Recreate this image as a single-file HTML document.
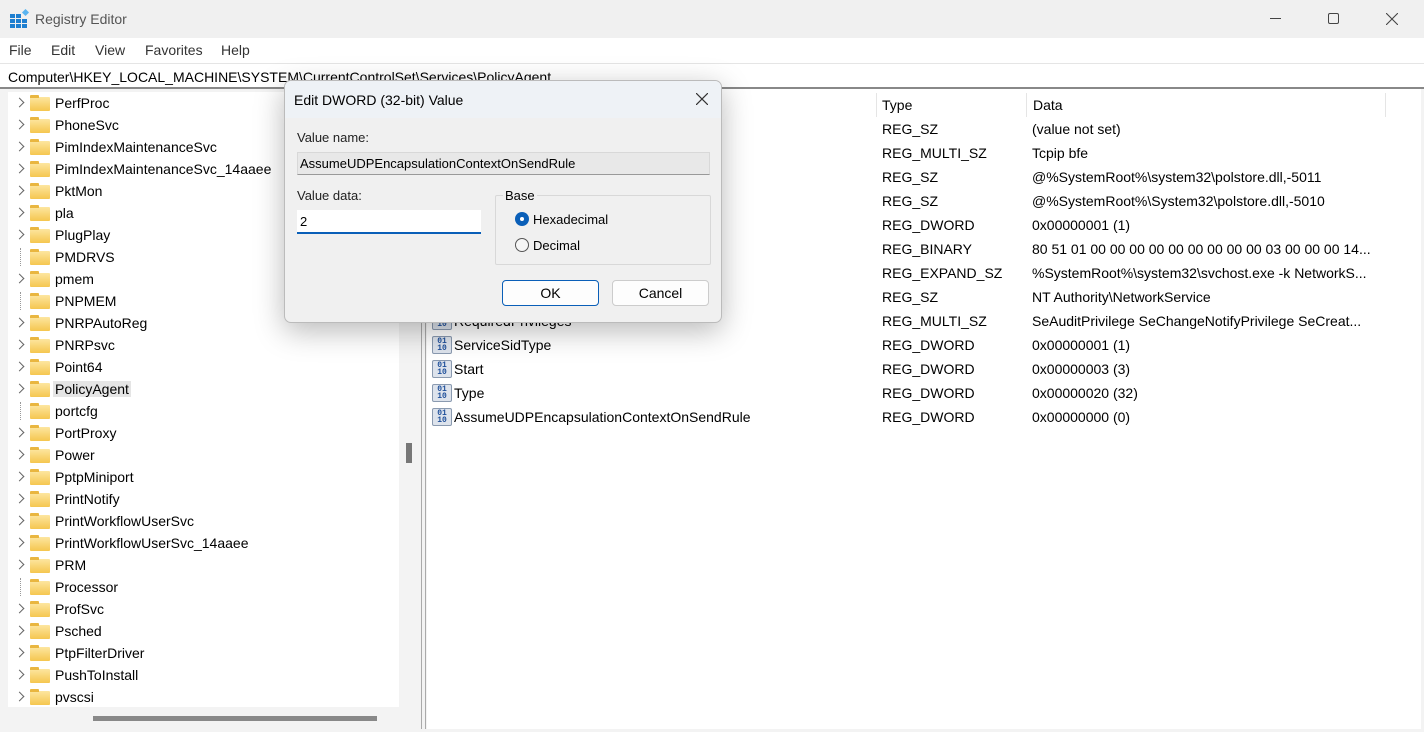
<!DOCTYPE html>
<html><head><meta charset="utf-8"><style>
*{margin:0;padding:0;box-sizing:border-box}
body{width:1424px;height:732px;overflow:hidden;background:#f3f3f3;font-family:"Liberation Sans",sans-serif;font-size:14px;color:#000;position:relative}
.abs{position:absolute}
.title{left:0;top:0;width:1424px;height:38px;background:#f0f0f0}
.menu{left:0;top:38px;width:1424px;height:25px;background:#fff}
.menu span{position:absolute;top:4px;color:#333;font-size:14px}
.addr{left:0;top:63px;width:1424px;height:26px;background:#fff;border-top:1px solid #e5e5e5;border-bottom:2px solid #888;padding:5px 8px;font-size:14px;white-space:nowrap}
.tree{left:3px;top:89px;width:418px;height:640px;background:#f3f3f3}
.treein{left:8px;top:92px;width:391px;height:615px;background:#fff}
.row{position:absolute;left:0;height:22px;width:391px;font-size:14px}
.row .ch{position:absolute;left:8px;top:7px;width:7px;height:7px;border-right:1.3px solid #666;border-top:1.3px solid #666;transform:rotate(45deg)}
.row .dot{position:absolute;left:12px;top:2px;width:1px;height:18px;border-left:1px dotted #999}
.row .fd{position:absolute;left:22px;top:5px;width:20px;height:14px;background:linear-gradient(#fde6a0,#f5c64f);border-radius:1px}
.row .fd:before{content:"";position:absolute;left:0;top:-2px;width:9px;height:3px;background:#e9b640;border-radius:1px 1px 0 0}
.row .t{position:absolute;left:47px;top:3px}
.sel{background:#e5e5e5}
.list{left:427px;top:89px;width:994px;height:640px;background:#fff}
.ic{position:absolute;left:5px;top:3px;width:20px;height:18px;background:#dde3ec;border:1px solid #8a9ab0;border-radius:2px;font-size:8px;line-height:7px;font-weight:bold;color:#1e4f9a;text-align:center;padding-top:1px;font-family:"Liberation Mono",monospace}
.dlg{left:284px;top:80px;width:438px;height:243px;background:#f0f0f0;border:1px solid #bbb;border-radius:7px;box-shadow:0 8px 30px rgba(0,0,0,.28);overflow:hidden}
.btn{position:absolute;height:26px;border:1px solid #ccc;border-radius:4px;background:#fdfdfd;text-align:center;line-height:24px;font-size:14px}
</style></head><body>
<div class="abs title">
 <svg class="abs" style="left:10px;top:9px" width="20" height="20" viewBox="0 0 20 20">
  <g fill="#1e7fd0"><rect x="0" y="5" width="5" height="4"/><rect x="6" y="5" width="5" height="4"/><rect x="0" y="10" width="5" height="4"/><rect x="6" y="10" width="5" height="4"/><rect x="12" y="10" width="5" height="4"/><rect x="0" y="15" width="5" height="4"/><rect x="6" y="15" width="5" height="4"/><rect x="12" y="15" width="5" height="4"/></g>
  <rect x="13" y="1" width="5" height="5" fill="#5ab4f0" transform="rotate(45 15.5 3.5)"/>
 </svg>
 <span class="abs" style="left:35px;top:11px;color:#555;font-size:14px">Registry Editor</span>
 <div class="abs" style="left:1270px;top:18px;width:11px;height:1px;background:#444"></div>
 <div class="abs" style="left:1328px;top:13px;width:11px;height:11px;border:1px solid #444;border-radius:2px"></div>
 <svg class="abs" style="left:1386px;top:13px" width="12" height="12"><path d="M0 0L12 12M12 0L0 12" stroke="#444" stroke-width="1.1"/></svg>
</div>
<div class="abs menu"><span style="left:9px">File</span><span style="left:51px">Edit</span><span style="left:95px">View</span><span style="left:145px">Favorites</span><span style="left:221px">Help</span></div>
<div class="abs addr">Computer\HKEY_LOCAL_MACHINE\SYSTEM\CurrentControlSet\Services\PolicyAgent</div>
<div class="abs tree"></div>
<div class="abs treein">
<div class="row" style="top:0"><i class="ch"></i><i class="fd"></i><span class="t">PerfProc</span></div>
<div class="row" style="top:22px"><i class="ch"></i><i class="fd"></i><span class="t">PhoneSvc</span></div>
<div class="row" style="top:44px"><i class="ch"></i><i class="fd"></i><span class="t">PimIndexMaintenanceSvc</span></div>
<div class="row" style="top:66px"><i class="ch"></i><i class="fd"></i><span class="t">PimIndexMaintenanceSvc_14aaee</span></div>
<div class="row" style="top:88px"><i class="ch"></i><i class="fd"></i><span class="t">PktMon</span></div>
<div class="row" style="top:110px"><i class="ch"></i><i class="fd"></i><span class="t">pla</span></div>
<div class="row" style="top:132px"><i class="ch"></i><i class="fd"></i><span class="t">PlugPlay</span></div>
<div class="row" style="top:154px"><i class="dot"></i><i class="fd"></i><span class="t">PMDRVS</span></div>
<div class="row" style="top:176px"><i class="ch"></i><i class="fd"></i><span class="t">pmem</span></div>
<div class="row" style="top:198px"><i class="dot"></i><i class="fd"></i><span class="t">PNPMEM</span></div>
<div class="row" style="top:220px"><i class="ch"></i><i class="fd"></i><span class="t">PNRPAutoReg</span></div>
<div class="row" style="top:242px"><i class="ch"></i><i class="fd"></i><span class="t">PNRPsvc</span></div>
<div class="row" style="top:264px"><i class="ch"></i><i class="fd"></i><span class="t">Point64</span></div>
<div class="row" style="top:286px"><i class="ch"></i><i class="fd"></i><span class="t sel" style="padding:0 2px;left:45px">PolicyAgent</span></div>
<div class="row" style="top:308px"><i class="dot"></i><i class="fd"></i><span class="t">portcfg</span></div>
<div class="row" style="top:330px"><i class="ch"></i><i class="fd"></i><span class="t">PortProxy</span></div>
<div class="row" style="top:352px"><i class="ch"></i><i class="fd"></i><span class="t">Power</span></div>
<div class="row" style="top:374px"><i class="ch"></i><i class="fd"></i><span class="t">PptpMiniport</span></div>
<div class="row" style="top:396px"><i class="ch"></i><i class="fd"></i><span class="t">PrintNotify</span></div>
<div class="row" style="top:418px"><i class="ch"></i><i class="fd"></i><span class="t">PrintWorkflowUserSvc</span></div>
<div class="row" style="top:440px"><i class="ch"></i><i class="fd"></i><span class="t">PrintWorkflowUserSvc_14aaee</span></div>
<div class="row" style="top:462px"><i class="ch"></i><i class="fd"></i><span class="t">PRM</span></div>
<div class="row" style="top:484px"><i class="dot"></i><i class="fd"></i><span class="t">Processor</span></div>
<div class="row" style="top:506px"><i class="ch"></i><i class="fd"></i><span class="t">ProfSvc</span></div>
<div class="row" style="top:528px"><i class="ch"></i><i class="fd"></i><span class="t">Psched</span></div>
<div class="row" style="top:550px"><i class="ch"></i><i class="fd"></i><span class="t">PtpFilterDriver</span></div>
<div class="row" style="top:572px"><i class="ch"></i><i class="fd"></i><span class="t">PushToInstall</span></div>
<div class="row" style="top:594px"><i class="ch"></i><i class="fd"></i><span class="t">pvscsi</span></div>
</div>
<div class="abs" style="left:406px;top:443px;width:6px;height:20px;background:#777"></div>
<div class="abs" style="left:93px;top:716px;width:284px;height:5px;background:#888"></div>
<div class="abs" style="left:421px;top:89px;width:1px;height:640px;background:#aaa"></div>
<div class="abs" style="left:425px;top:89px;width:1px;height:640px;background:#aaa"></div>
<div class="abs list">
 <div class="abs" style="left:449px;top:4px;width:1px;height:24px;background:#e5e5e5"></div>
 <div class="abs" style="left:599px;top:4px;width:1px;height:24px;background:#e5e5e5"></div>
 <div class="abs" style="left:958px;top:4px;width:1px;height:24px;background:#e5e5e5"></div>
 <span class="abs" style="left:455px;top:8px">Type</span><span class="abs" style="left:606px;top:8px">Data</span>
</div>
<div id="rows"></div>
<div class="abs dlg">
 <div class="abs" style="left:0;top:0;width:438px;height:37px;background:#eef2f6"></div>
 <span class="abs" style="left:9px;top:11px;font-size:14px">Edit DWORD (32-bit) Value</span>
 <svg class="abs" style="left:411px;top:12px" width="12" height="12"><path d="M0 0L12 12M12 0L0 12" stroke="#333" stroke-width="1.2"/></svg>
 <span class="abs" style="left:12px;top:49px;font-size:13px;color:#222">Value name:</span>
 <div class="abs" style="left:12px;top:71px;width:413px;height:23px;background:#e8e8e8;border:1px solid #d8d8d8;border-bottom-color:#999;font-size:13px;padding:3px 2px">AssumeUDPEncapsulationContextOnSendRule</div>
 <span class="abs" style="left:12px;top:107px;font-size:13px;color:#222">Value data:</span>
 <div class="abs" style="left:12px;top:129px;width:184px;height:24px;background:#fff;border-bottom:2px solid #0a5fb8;font-size:13px;padding:4px 3px">2</div>
 <div class="abs" style="left:210px;top:114px;width:216px;height:70px;border:1px solid #d8d8d8;border-radius:2px"></div>
 <span class="abs" style="left:218px;top:107px;font-size:13px;background:#f0f0f0;padding:0 2px">Base</span>
 <div class="abs" style="left:230px;top:131px;width:14px;height:14px;border-radius:50%;background:#0a5fb8"></div>
 <div class="abs" style="left:235px;top:136px;width:4px;height:4px;border-radius:50%;background:#fff"></div>
 <span class="abs" style="left:248px;top:131px;font-size:13px">Hexadecimal</span>
 <div class="abs" style="left:230px;top:157px;width:14px;height:14px;border-radius:50%;border:1px solid #555;background:#f6f6f6"></div>
 <span class="abs" style="left:248px;top:157px;font-size:13px">Decimal</span>
 <div class="btn" style="left:217px;top:199px;width:97px;border-color:#0a5fb8">OK</div>
 <div class="btn" style="left:327px;top:199px;width:97px">Cancel</div>
</div>
<script>
var d=[["","REG_SZ","(value not set)"],["","REG_MULTI_SZ","Tcpip bfe"],["","REG_SZ","@%SystemRoot%\\system32\\polstore.dll,-5011"],["","REG_SZ","@%SystemRoot%\\System32\\polstore.dll,-5010"],["","REG_DWORD","0x00000001 (1)"],["","REG_BINARY","80 51 01 00 00 00 00 00 00 00 00 00 03 00 00 00 14..."],["","REG_EXPAND_SZ","%SystemRoot%\\system32\\svchost.exe -k NetworkS..."],["","REG_SZ","NT Authority\\NetworkService"],["RequiredPrivileges","REG_MULTI_SZ","SeAuditPrivilege SeChangeNotifyPrivilege SeCreat..."],["ServiceSidType","REG_DWORD","0x00000001 (1)"],["Start","REG_DWORD","0x00000003 (3)"],["Type","REG_DWORD","0x00000020 (32)"],["AssumeUDPEncapsulationContextOnSendRule","REG_DWORD","0x00000000 (0)"]];
var h="";d.forEach(function(r,i){var y=118+i*24;
h+='<div class="abs" style="left:0;top:'+(y+3)+'px;font-size:14px;width:100%">'+(r[0]?'<div class="ic" style="left:432px;top:-1px">01<br>10</div><span class="abs" style="left:454px">'+r[0]+'</span>':'')+'<span class="abs" style="left:882px">'+r[1]+'</span><span class="abs" style="left:1032px">'+r[2]+'</span></div>';});
document.getElementById("rows").outerHTML=h;
</script>
</body></html>
